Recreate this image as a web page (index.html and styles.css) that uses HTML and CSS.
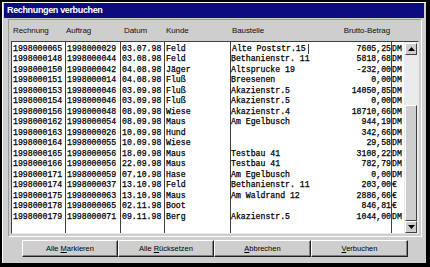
FILE: index.html
```html
<!DOCTYPE html>
<html lang="de">
<head>
<meta charset="utf-8">
<title>Rechnungen verbuchen</title>
<link rel="stylesheet" href="styles.css">
</head>
<body>
<div class="window">
  <div class="titlebar">Rechnungen verbuchen</div>
  <div class="panel">
    <div class="header cols">
      <span class="h1">Rechnung</span>
      <span class="h2">Auftrag</span>
      <span class="h3">Datum</span>
      <span class="h4">Kunde</span>
      <span class="h5">Baustelle</span>
      <span class="h6">Brutto-Betrag</span>
      <span></span>
    </div>
    <div class="list">
      <div class="rows">
        <div class="row cols"><span>1998000065</span><span>1998000029</span><span>03.07.98</span><span>Feld</span><span><span class="edit">Alte Poststr.15</span></span><span class="amt">7605,25</span><span class="cur">DM</span></div>
        <div class="row cols"><span>1998000148</span><span>1998000044</span><span>03.08.98</span><span>Feld</span><span>Bethanienstr. 11</span><span class="amt">5818,68</span><span class="cur">DM</span></div>
        <div class="row cols"><span>1998000150</span><span>1998000042</span><span>04.08.98</span><span>Jäger</span><span>Altsprucke 19</span><span class="amt">-232,00</span><span class="cur">DM</span></div>
        <div class="row cols"><span>1998000151</span><span>1998000014</span><span>04.08.98</span><span>Fluß</span><span>Breesenen</span><span class="amt">0,00</span><span class="cur">DM</span></div>
        <div class="row cols"><span>1998000153</span><span>1998000046</span><span>03.09.98</span><span>Fluß</span><span>Akazienstr.5</span><span class="amt">14050,85</span><span class="cur">DM</span></div>
        <div class="row cols"><span>1998000154</span><span>1998000046</span><span>03.09.98</span><span>Fluß</span><span>Akazienstr.5</span><span class="amt">0,00</span><span class="cur">DM</span></div>
        <div class="row cols"><span>1998000156</span><span>1998000048</span><span>08.09.98</span><span>Wiese</span><span>Akazienstr.4</span><span class="amt">18710,66</span><span class="cur">DM</span></div>
        <div class="row cols"><span>1998000162</span><span>1998000054</span><span>08.09.98</span><span>Maus</span><span>Am Egelbusch</span><span class="amt">944,19</span><span class="cur">DM</span></div>
        <div class="row cols"><span>1998000163</span><span>1998000026</span><span>10.09.98</span><span>Hund</span><span></span><span class="amt">342,66</span><span class="cur">DM</span></div>
        <div class="row cols"><span>1998000164</span><span>1998000055</span><span>10.09.98</span><span>Wiese</span><span></span><span class="amt">29,58</span><span class="cur">DM</span></div>
        <div class="row cols"><span>1998000165</span><span>1998000056</span><span>18.09.98</span><span>Maus</span><span>Testbau 41</span><span class="amt">3108,22</span><span class="cur">DM</span></div>
        <div class="row cols"><span>1998000166</span><span>1998000056</span><span>22.09.98</span><span>Maus</span><span>Testbau 41</span><span class="amt">782,79</span><span class="cur">DM</span></div>
        <div class="row cols"><span>1998000171</span><span>1998000059</span><span>07.10.98</span><span>Hase</span><span>Am Egelbusch</span><span class="amt">0,00</span><span class="cur">DM</span></div>
        <div class="row cols"><span>1998000174</span><span>1998000037</span><span>13.10.98</span><span>Feld</span><span>Bethanienstr. 11</span><span class="amt">203,00</span><span class="cur">€</span></div>
        <div class="row cols"><span>1998000175</span><span>1998000063</span><span>13.10.98</span><span>Maus</span><span>Am Waldrand 12</span><span class="amt">2886,66</span><span class="cur">€</span></div>
        <div class="row cols"><span>1998000178</span><span>1998000065</span><span>02.11.98</span><span>Boot</span><span></span><span class="amt">846,81</span><span class="cur">€</span></div>
        <div class="row cols"><span>1998000179</span><span>1998000071</span><span>09.11.98</span><span>Berg</span><span>Akazienstr.5</span><span class="amt">1044,00</span><span class="cur">DM</span></div>
      </div>
      <div class="scrollbar">
        <div class="sbtn"><svg width="7" height="4" viewBox="0 0 7 4"><path d="M3.5 0 L7 4 L0 4 Z" fill="#000"/></svg></div>
        <div class="track"></div>
        <div class="thumb"></div>
        <div class="sbtn"><svg width="7" height="4" viewBox="0 0 7 4"><path d="M0 0 L7 0 L3.5 4 Z" fill="#000"/></svg></div>
      </div>
    </div>
  </div>
  <div class="footer">
    <button class="btn">Alle <u>M</u>arkieren</button>
    <button class="btn">Alle <u>R</u>ücksetzen</button>
    <button class="btn wide"><u>A</u>bbrechen</button>
    <button class="btn wide"><u>V</u>erbuchen</button>
  </div>
</div>
</body>
</html>
```

FILE: styles.css
```css
* { box-sizing: border-box; }
html, body { margin: 0; padding: 0; }
body {
  width: 430px;
  height: 267px;
  background: #000;
  font-family: "Liberation Sans", Arial, sans-serif;
  overflow: hidden;
}
.window {
  width: 430px;
  height: 267px;
  border-style: solid;
  border-color: #000;
  border-width: 2px 4px 4px 2px;
  background: #cecece;
  padding: 1px 2px 0 2px;
  box-shadow: inset 1px 1px 0 #ffffff;
  display: flex;
  flex-direction: column;
}
.titlebar {
  height: 15px;
  background: #0c0c80;
  color: #fff;
  font-weight: bold;
  font-size: 9px;
  line-height: 15px;
  padding-left: 3px;
  letter-spacing: -0.35px;
}
.panel {
  margin: 1px 2px 0 4px;
  border: 1px solid;
  border-color: #9a9a9a #ffffff #ffffff #9a9a9a;
  padding: 0 2px 2px 2px;
}
.cols {
  display: grid;
  grid-template-columns: 53px 55px 44px 66px 82px 79px 13px;
}
.header {
  height: 21px;
  margin-left: 1px;
  align-items: center;
  font-size: 8px;
  color: #111;
  letter-spacing: -0.1px;
}
.header .h1 { padding-left: 1px; }
.header .h2 { padding-left: 1px; }
.header .h3 { padding-left: 4px; }
.header .h4 { padding-left: 2px; }
.header .h5 { padding-left: 2px; }
.header .h6 { text-align: right; padding-right: 1px; }
.list {
  display: flex;
  height: 193px;
  background: #fff;
  border: 1px solid;
  border-color: #404040 #e8e8e8 #e8e8e8 #404040;
}
.rows {
  width: 392px;
  padding-top: 1.5px;
  font-family: "Liberation Mono", "Courier New", monospace;
  font-size: 8.2px;
  color: #000;
  -webkit-text-stroke: 0.25px #000;
  background-image:
    linear-gradient(#404040, #404040),
    linear-gradient(#404040, #404040),
    linear-gradient(#404040, #404040),
    linear-gradient(#404040, #404040),
    linear-gradient(#404040, #404040);
  background-size: 1px 100%;
  background-repeat: no-repeat;
  background-position: 53px 0, 108px 0, 152px 0, 218px 0, 379px 0;
}
.row {
  height: 10.5px;
  line-height: 10.5px;
  white-space: nowrap;
}
.row > span:nth-child(1) { padding-left: 1px; }
.row > span:nth-child(2) { padding-left: 2px; }
.row > span:nth-child(3) { padding-left: 2px; }
.row > span:nth-child(4) { padding-left: 2px; }
.row > span:nth-child(5) { padding-left: 1px; }
.row .amt { text-align: right; }
.row .cur { padding-left: 1px; }
.edit {
  display: inline-block;
  padding: 0 2px 0 1px;
  border-right: 1px solid #404040;
}
.scrollbar {
  width: 14px;
  display: flex;
  flex-direction: column;
  background: #ebebeb;
  padding-top: 1px;
}
.sbtn {
  height: 12px;
  width: 12px;
  margin-left: 1px;
  background: #cecece;
  border: 1px solid;
  border-color: #ffffff #404040 #404040 #ffffff;
  display: flex;
  align-items: center;
  justify-content: center;
}
.track { height: 50px; }
.thumb {
  flex: 1;
  width: 12px;
  margin-left: 1px;
  background: #cecece;
  border: 1px solid;
  border-color: #ffffff #404040 #404040 #ffffff;
}
.footer {
  flex: 1;
  display: flex;
  padding: 3px 0 0 18px;
  align-items: flex-start;
}
.btn {
  width: 96px;
  height: 17px;
  padding: 0;
  margin: 0;
  background: #cecece;
  font-family: "Liberation Sans", Arial, sans-serif;
  font-size: 7.5px;
  color: #000;
  border: 1px solid;
  border-color: #ffffff #202020 #202020 #ffffff;
  box-shadow: inset -1px -1px 0 #808080;
}
.btn.wide { width: 97px; }
```
